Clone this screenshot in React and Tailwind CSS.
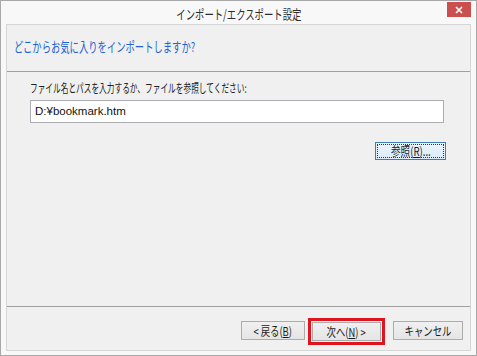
import React from 'react';

const font = { fontFamily: '"Noto Sans CJK JP", "Noto Sans", sans-serif' };

// Meiryo UI-ish narrow kana: squeeze CJK text horizontally
function Narrow({ children, className = '' }) {
  return <span className={`inline-block whitespace-nowrap ${className}`}>{children}</span>;
}

function Btn({ children, className = '' }) {
  return (
    <div
      className={`h-[19px] flex items-center justify-center border border-[#acacac] bg-gradient-to-b from-[#f0f0f0] to-[#e5e5e5] text-[12px] text-[#1a1a1a] leading-none ${className}`}
    >
      <Narrow className="scale-x-[0.78]">{children}</Narrow>
    </div>
  );
}

export default function App() {
  return (
    <div
      className="w-[477px] h-[356px] border border-[#a8a8a8] bg-[#f8f8f8] flex flex-col px-[5px] pb-[4px]"
      style={font}
    >
      {/* title bar */}
      <div className="h-[23px] relative flex items-center justify-center">
        <Narrow className="text-[13px] text-[#2b2b2b] mt-[3px] scale-x-[0.72]">インポート/エクスポート設定</Narrow>
        <div className="absolute right-[0px] top-[1px] w-[24px] h-[15px] bg-[#c9504f] flex items-center justify-center">
          <svg width="8" height="8" viewBox="0 0 8 8">
            <path d="M1 1 L7 7 M7 1 L1 7" stroke="#fff" strokeWidth="1.6" />
          </svg>
        </div>
      </div>

      {/* panel */}
      <div className="flex-1 border border-[#d6d6d6] bg-[#f0f0f0] flex flex-col">
        <div className="h-[47px] border-b border-[#a0a0a0] pl-[7px] pt-[8px]">
          <Narrow className="text-[13.5px] text-[#1d64d0] scale-x-[0.69] origin-left">
            どこからお気に入りをインポートしますか?
          </Narrow>
        </div>

        <div className="h-[234px] border-b border-[#a0a0a0] box-content flex flex-col pl-[23px]">
          <div className="mt-[8px] h-[16px] text-[12px] text-[#222] leading-[16px]">
            <Narrow className="scale-x-[0.64] origin-left">
              ファイル名とパスを入力するか、ファイルを参照してください:
            </Narrow>
          </div>
          <div
            className="mt-[4px] w-[414px] h-[23px] border border-[#abadb3] bg-white flex items-center pl-[4px] text-[11.5px] text-[#111]"
            style={{ fontFamily: '"Liberation Sans", "Noto Sans CJK JP", sans-serif' }}
          >
            D:¥bookmark.htm
          </div>
          <div className="mt-[19px] ml-[345px] w-[71px] h-[18px] border border-[#3c7fb1] bg-gradient-to-b from-[#eaf4fb] to-[#dcecfc] p-[1px]">
            <div className="w-full h-full border border-dotted border-[#333] flex items-center justify-center text-[12px] text-[#1a1a1a] leading-none">
              <Narrow className="scale-x-[0.8]">
                参照(<span className="underline">R</span>)...
              </Narrow>
            </div>
          </div>
        </div>

        <div className="flex-1 flex items-start pt-[14px] pl-[234px]">
          <Btn className="w-[64px]">
            &lt; 戻る(<span className="underline">B</span>)
          </Btn>
          <div className="ml-[3px] mt-[-3px] border-[3px] border-[#e0141e] p-[1px]">
            <Btn className="w-[69px]">
              次へ(<span className="underline">N</span>) &gt;
            </Btn>
          </div>
          <Btn className="w-[70px] ml-[8px]">キャンセル</Btn>
        </div>
      </div>
    </div>
  );
}
